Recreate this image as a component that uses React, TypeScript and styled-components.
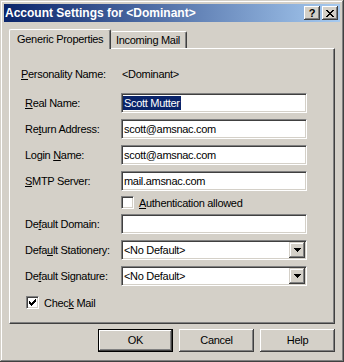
import React from 'react';
import styled, { createGlobalStyle } from 'styled-components';

const FACE = '#d4d0c8';
const SHADOW = '#808080';
const DARK = '#404040';
const LIGHT = '#ffffff';

const GlobalStyle = createGlobalStyle`
  html, body { margin: 0; padding: 0; background: ${FACE}; }
  body {
    font-family: "Liberation Sans", Arial, sans-serif;
    font-size: 11px;
    letter-spacing: -0.3px;
    color: #000;
  }
  #root { width: 344px; height: 362px; }
`;

const Window = styled.div`
  width: 344px;
  height: 362px;
  box-sizing: border-box;
  padding: 4px;
  background: ${FACE};
  box-shadow: inset -1px -1px ${DARK}, inset 1px 1px ${FACE},
    inset -2px -2px ${SHADOW}, inset 2px 2px ${LIGHT};
  display: flex;
  flex-direction: column;
`;

const TitleBar = styled.div`
  height: 18px;
  display: flex;
  align-items: center;
  padding: 0 2px 0 1px;
  background: linear-gradient(to right, #0a246a, #a6caf0);
`;

const Title = styled.div`
  flex: 1;
  color: #fff;
  font-weight: bold;
  font-size: 12px;
  letter-spacing: 0;
  white-space: nowrap;
`;

const CaptionButton = styled.div<{ $gap?: number }>`
  width: 16px;
  height: 14px;
  box-sizing: border-box;
  margin-left: ${p => p.$gap ?? 0}px;
  background: ${FACE};
  box-shadow: inset -1px -1px ${DARK}, inset 1px 1px ${LIGHT},
    inset -2px -2px ${SHADOW};
  display: flex;
  align-items: center;
  justify-content: center;
  font-weight: bold;
  font-size: 11px;
  letter-spacing: 0;
  line-height: 1;
`;

const TabRow = styled.div`
  margin-top: 7px;
  padding-left: 5px;
  height: 19px;
  display: flex;
  align-items: flex-start;
`;

const Tab = styled.div<{ $active?: boolean; $width: number }>`
  position: relative;
  z-index: ${p => (p.$active ? 2 : 1)};
  width: ${p => p.$width}px;
  height: ${p => (p.$active ? 20 : 17)}px;
  margin-top: ${p => (p.$active ? 0 : 2)}px;
  box-sizing: border-box;
  background: ${FACE};
  border-top: 1px solid ${LIGHT};
  border-left: ${p => (p.$active ? `1px solid ${LIGHT}` : 'none')};
  border-right: 1px solid ${DARK};
  border-top-left-radius: 2px;
  border-top-right-radius: 2px;
  box-shadow: inset -1px 0 ${SHADOW};
  padding-left: ${p => (p.$active ? 7 : 5)}px;
  padding-top: ${p => (p.$active ? 3 : 2)}px;
  line-height: 13px;
  white-space: nowrap;
`;

const Panel = styled.div`
  margin: 0 5px;
  width: 326px;
  height: 276px;
  box-sizing: border-box;
  border: 1px solid;
  border-color: ${LIGHT} ${DARK} ${DARK} ${LIGHT};
  box-shadow: inset -1px -1px ${SHADOW};
  padding: 15px 0 0 11px;
`;

const Form = styled.div`
  display: flex;
  flex-direction: column;
  gap: 6px;
`;

const Row = styled.div<{ $h?: number; $mt?: number }>`
  display: grid;
  grid-template-columns: 100px 186px;
  align-items: center;
  height: ${p => p.$h ?? 20}px;
  margin-top: ${p => p.$mt ?? 0}px;
`;

const Label = styled.div<{ $indent?: number }>`
  padding-left: ${p => p.$indent ?? 4}px;
  white-space: nowrap;
`;

const PlainValue = styled.div`
  padding-left: 1px;
`;

const TextBox = styled.div`
  width: 186px;
  height: 20px;
  box-sizing: border-box;
  background: #fff;
  border: 1px solid;
  border-color: ${SHADOW} ${LIGHT} ${LIGHT} ${SHADOW};
  box-shadow: inset 1px 1px ${DARK}, inset -1px -1px ${FACE};
  padding: 1px;
  display: flex;
  align-items: center;
  white-space: nowrap;
`;

const BoxText = styled.span<{ $selected?: boolean }>`
  padding: 0 1px;
  line-height: 14px;
  background: ${p => (p.$selected ? '#0a246a' : 'transparent')};
  color: ${p => (p.$selected ? '#fff' : '#000')};
`;

const ComboText = styled.div`
  flex: 1;
  padding-left: 1px;
`;

const DropButton = styled.div`
  width: 16px;
  height: 16px;
  box-sizing: border-box;
  background: ${FACE};
  box-shadow: inset -1px -1px ${DARK}, inset 1px 1px ${FACE},
    inset -2px -2px ${SHADOW}, inset 2px 2px ${LIGHT};
  display: flex;
  align-items: center;
  justify-content: center;
`;

const CheckRow = styled.div<{ $indent?: number; $h?: number; $mt?: number }>`
  display: flex;
  align-items: center;
  gap: 5px;
  height: ${p => (p.$h ? `${p.$h}px` : 'auto')};
  margin-top: ${p => p.$mt ?? 0}px;
  padding-left: ${p => p.$indent ?? 0}px;
  white-space: nowrap;
`;

const CheckBox = styled.div`
  width: 13px;
  height: 13px;
  box-sizing: border-box;
  background: #fff;
  border: 1px solid;
  border-color: ${SHADOW} ${LIGHT} ${LIGHT} ${SHADOW};
  box-shadow: inset 1px 1px ${DARK}, inset -1px -1px ${FACE};
  display: flex;
  align-items: center;
  justify-content: center;
`;

const ButtonRow = styled.div`
  margin-top: 5px;
  padding-right: 5px;
  display: flex;
  justify-content: flex-end;
  gap: 6px;
`;

const PushButton = styled.div<{ $default?: boolean }>`
  width: 75px;
  height: 23px;
  box-sizing: border-box;
  background: ${FACE};
  border: ${p => (p.$default ? '1px solid #000' : 'none')};
  box-shadow: inset -1px -1px ${DARK}, inset 1px 1px ${LIGHT},
    inset -2px -2px ${SHADOW};
  display: flex;
  align-items: center;
  justify-content: center;
  padding-bottom: 1px;
`;

const Arrow = () => (
  <svg width="7" height="4" viewBox="0 0 7 4" shapeRendering="crispEdges">
    <path d="M0 0h7v1H0zM1 1h5v1H1zM2 2h3v1H2zM3 3h1v1H3z" fill="#000" />
  </svg>
);

const Tick = () => (
  <svg width="7" height="7" viewBox="0 0 7 7" shapeRendering="crispEdges">
    <path
      d="M6 0h1v1H6zM5 1h2v1H5zM0 2h1v1H0zM4 2h3v1H4zM0 3h2v1H0zM3 3h3v1H3zM0 4h5v1H0zM1 5h3v1H1zM2 6h1v1H2z"
      fill="#000"
    />
  </svg>
);

const CloseGlyph = () => (
  <svg width="8" height="7" viewBox="0 0 8 7" shapeRendering="crispEdges">
    <path
      d="M0 0h2v1H0zM6 0h2v1H6zM1 1h2v1H1zM5 1h2v1H5zM2 2h4v1H2zM3 3h2v1H3zM2 4h4v1H2zM1 5h2v1H1zM5 5h2v1H5zM0 6h2v1H0zM6 6h2v1H6z"
      fill="#000"
    />
  </svg>
);

const Combo = ({ value }: { value: string }) => (
  <TextBox>
    <ComboText>{value}</ComboText>
    <DropButton>
      <Arrow />
    </DropButton>
  </TextBox>
);

export default function App() {
  return (
    <>
      <GlobalStyle />
      <Window>
        <TitleBar>
          <Title>Account Settings for &lt;Dominant&gt;</Title>
          <CaptionButton>?</CaptionButton>
          <CaptionButton $gap={2}>
            <CloseGlyph />
          </CaptionButton>
        </TitleBar>

        <TabRow>
          <Tab $active $width={102}>Generic Properties</Tab>
          <Tab $width={76}>Incoming Mail</Tab>
        </TabRow>

        <Panel>
          <Form>
            <Row>
              <Label $indent={0}>
                <u>P</u>ersonality Name:
              </Label>
              <PlainValue>&lt;Dominant&gt;</PlainValue>
            </Row>
            <Row $mt={3}>
              <Label>
                <u>R</u>eal Name:
              </Label>
              <TextBox>
                <BoxText $selected>Scott Mutter</BoxText>
              </TextBox>
            </Row>
            <Row>
              <Label>
                Re<u>t</u>urn Address:
              </Label>
              <TextBox>
                <BoxText>scott@amsnac.com</BoxText>
              </TextBox>
            </Row>
            <Row>
              <Label>
                Login <u>N</u>ame:
              </Label>
              <TextBox>
                <BoxText>scott@amsnac.com</BoxText>
              </TextBox>
            </Row>
            <Row>
              <Label>
                <u>S</u>MTP Server:
              </Label>
              <TextBox>
                <BoxText>mail.amsnac.com</BoxText>
              </TextBox>
            </Row>
            <Row $h={13} $mt={-1}>
              <span />
              <CheckRow>
                <CheckBox />
                <span>
                  <u>A</u>uthentication allowed
                </span>
              </CheckRow>
            </Row>
            <Row $mt={-1}>
              <Label>
                De<u>f</u>ault Domain:
              </Label>
              <TextBox />
            </Row>
            <Row>
              <Label>
                Defa<u>u</u>lt Stationery:
              </Label>
              <Combo value="<No Default>" />
            </Row>
            <Row>
              <Label>
                De<u>f</u>ault Signature:
              </Label>
              <Combo value="<No Default>" />
            </Row>
            <CheckRow $indent={5} $h={13} $mt={4}>
              <CheckBox>
                <Tick />
              </CheckBox>
              <span>
                Chec<u>k</u> Mail
              </span>
            </CheckRow>
          </Form>
        </Panel>

        <ButtonRow>
          <PushButton $default>OK</PushButton>
          <PushButton>Cancel</PushButton>
          <PushButton>Help</PushButton>
        </ButtonRow>
      </Window>
    </>
  );
}
